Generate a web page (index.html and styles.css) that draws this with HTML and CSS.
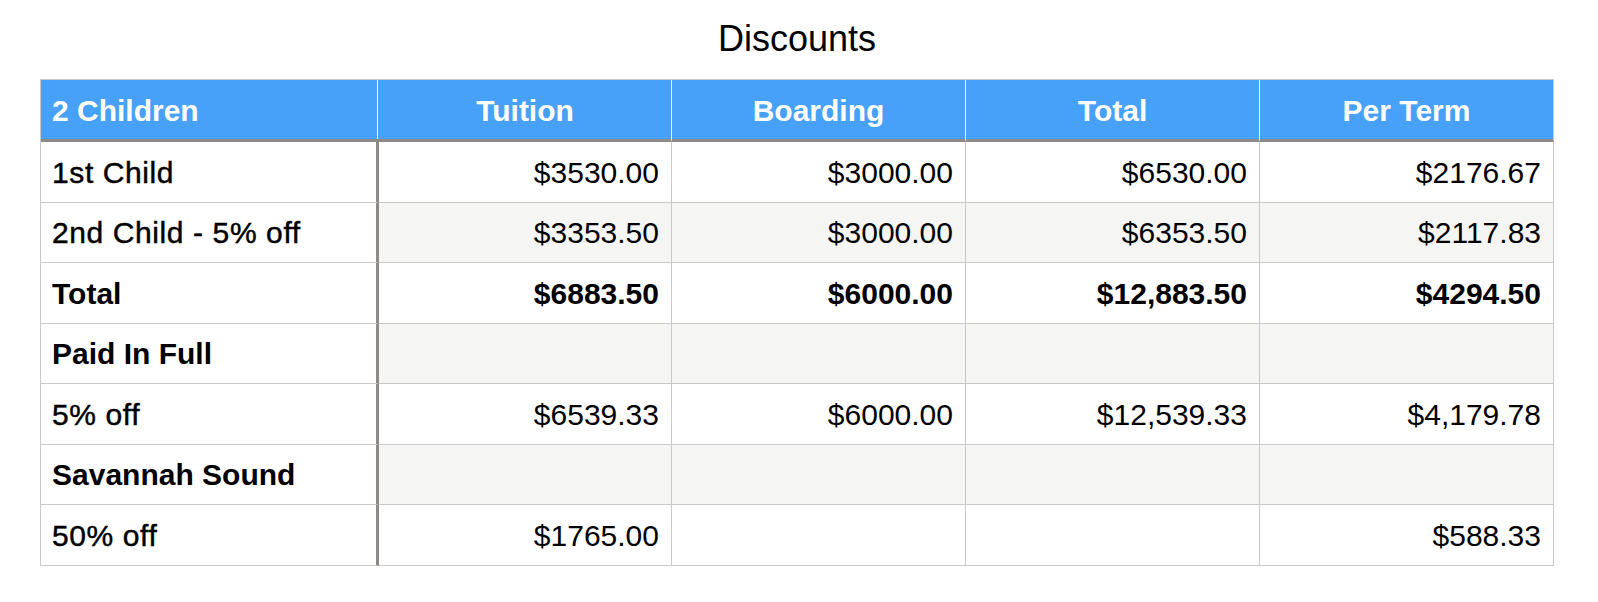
FILE: index.html
```html
<!DOCTYPE html>
<html lang="en">
<head>
<meta charset="utf-8">
<title>Discounts</title>
<link rel="stylesheet" href="styles.css">
</head>
<body>
<div class="sheet">
  <h1 class="title">Discounts</h1>
  <table class="grid">
    <thead>
      <tr>
        <th class="label">2 Children</th>
        <th class="c2">Tuition</th>
        <th class="c3">Boarding</th>
        <th class="c4">Total</th>
        <th class="c5">Per Term</th>
      </tr>
    </thead>
    <tbody>
      <tr>
        <td class="label">1st Child</td>
        <td>$3530.00</td>
        <td>$3000.00</td>
        <td>$6530.00</td>
        <td>$2176.67</td>
      </tr>
      <tr class="alt">
        <td class="label">2nd Child - 5% off</td>
        <td>$3353.50</td>
        <td>$3000.00</td>
        <td>$6353.50</td>
        <td>$2117.83</td>
      </tr>
      <tr class="strong">
        <td class="label">Total</td>
        <td>$6883.50</td>
        <td>$6000.00</td>
        <td>$12,883.50</td>
        <td>$4294.50</td>
      </tr>
      <tr class="alt strong">
        <td class="label">Paid In Full</td>
        <td></td>
        <td></td>
        <td></td>
        <td></td>
      </tr>
      <tr>
        <td class="label">5% off</td>
        <td>$6539.33</td>
        <td>$6000.00</td>
        <td>$12,539.33</td>
        <td>$4,179.78</td>
      </tr>
      <tr class="alt strong">
        <td class="label">Savannah Sound</td>
        <td></td>
        <td></td>
        <td></td>
        <td></td>
      </tr>
      <tr>
        <td class="label">50% off</td>
        <td>$1765.00</td>
        <td></td>
        <td></td>
        <td>$588.33</td>
      </tr>
    </tbody>
  </table>
</div>
</body>
</html>
```

FILE: styles.css
```css
html, body {
  margin: 0;
  padding: 0;
  background: #ffffff;
}

body {
  font-family: "Liberation Sans", Arial, Helvetica, sans-serif;
  color: #000000;
}

.sheet {
  width: 1514px;
  margin-left: 40px;
}

.title {
  margin: 19px 0 20px;
  font-size: 36px;
  font-weight: 400;
  line-height: 40px;
  text-align: center;
}

.grid {
  width: 1514px;
  table-layout: fixed;
  border-collapse: separate;
  border-spacing: 0;
  border-top: 1px solid #c9c9c9;
  border-left: 1px solid #c9c9c9;
}

.grid th,
.grid td {
  box-sizing: border-box;
  font-size: 30px;
  line-height: 34px;
  white-space: nowrap;
  vertical-align: middle;
}

/* header */
.grid thead th {
  height: 62px;
  padding: 2px 12px 0;
  background: #48a1f8;
  color: #ffffff;
  font-weight: 700;
  text-align: center;
  border-right: 1px solid #ffffff;
  border-bottom: 3px solid #8e8a86;
}

.grid thead th.label {
  width: 338px;
  padding-left: 11px;
  text-align: left;
  border-right: 3px solid transparent;
  background:
    linear-gradient(#8e8a86, #8e8a86) left bottom / 100% 3px no-repeat border-box,
    linear-gradient(to left, #48a1f8 0 1px, #ffffff 1px 2px, #48a1f8 2px) border-box;
}

.grid thead th.c2 { width: 293px; }
.grid thead th.c3 { width: 294px; }
.grid thead th.c4 { width: 294px; }
.grid thead th.c5 {
  width: 294px;
  border-right-color: #c9c9c9;
}

/* body */
.grid td {
  height: 60.5px;
  padding: 2px 12px 0;
  text-align: right;
  font-weight: 400;
  background: #ffffff;
  border-right: 1px solid #c9c9c9;
  border-bottom: 1px solid #c9c9c9;
}

.grid td.label {
  padding-left: 11px;
  text-align: left;
  border-right: 3px solid #8e8a86;
  letter-spacing: 0.6px;
  -webkit-text-stroke: 0.45px #000000;
}

.grid tr.alt td {
  background: #f5f5f4;
}

.grid tr.alt td.label {
  background: #ffffff;
}

.grid tr.strong td {
  font-weight: 700;
}

.grid tr.strong td.label {
  letter-spacing: 0;
  -webkit-text-stroke: 0;
}
```
